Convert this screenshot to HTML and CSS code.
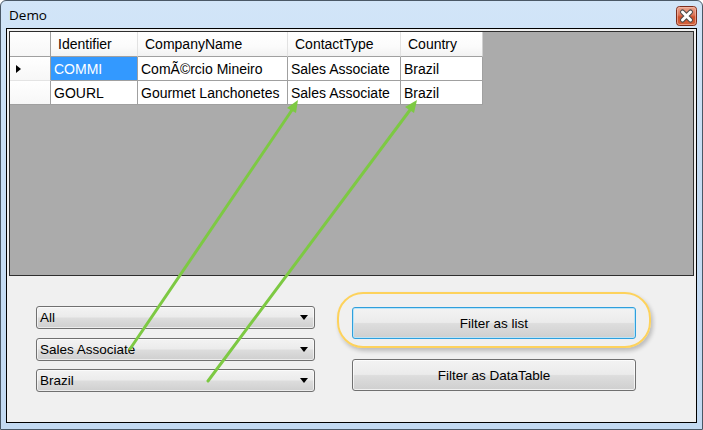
FILE: index.html
```html
<!DOCTYPE html>
<html>
<head>
<meta charset="utf-8">
<title>Demo</title>
<link rel="stylesheet" href="styles.css">
</head>
<body>
<div class="window">
  <div class="titlebar">
    <span class="title">Demo</span>
    <span class="close">
      <svg width="21" height="20" viewBox="0 0 21 20">
        <defs>
          <linearGradient id="cg" x1="0" y1="0" x2="0" y2="1">
            <stop offset="0" stop-color="#eba893"/>
            <stop offset="0.45" stop-color="#dc7458"/>
            <stop offset="0.55" stop-color="#cd4f2c"/>
            <stop offset="1" stop-color="#d2633c"/>
          </linearGradient>
        </defs>
        <rect x="0.5" y="0.5" width="20" height="19" rx="3" fill="url(#cg)" stroke="#7d2c1c"/>
        <rect x="1.5" y="1.5" width="18" height="17" rx="2" fill="none" stroke="#f3c2b2" stroke-opacity="0.6"/>
        <path d="M6.5 6 L14.5 14 M14.5 6 L6.5 14" stroke="#4a4a4a" stroke-width="5" stroke-linecap="round"/>
        <path d="M6.5 6 L14.5 14 M14.5 6 L6.5 14" stroke="#ffffff" stroke-width="3" stroke-linecap="round"/>
      </svg>
    </span>
  </div>
  <div class="client">
    <div class="grid">
      <table class="dgv">
        <tr class="hdr">
          <th class="rh"></th>
          <th class="c-id">Identifier</th>
          <th class="c-co">CompanyName</th>
          <th class="c-ct">ContactType</th>
          <th class="c-cn">Country</th>
        </tr>
        <tr>
          <td class="rh"><span class="cur"></span></td>
          <td class="sel">COMMI</td>
          <td>ComÃ©rcio Mineiro</td>
          <td>Sales Associate</td>
          <td>Brazil</td>
        </tr>
        <tr>
          <td class="rh"></td>
          <td>GOURL</td>
          <td>Gourmet Lanchonetes</td>
          <td>Sales Associate</td>
          <td>Brazil</td>
        </tr>
      </table>
    </div>
    <div class="panel">
      <div class="combos">
        <div class="combo"><span class="combo-text">All</span><span class="drop"></span></div>
        <div class="combo mid"><span class="combo-text">Sales Associate</span><span class="drop"></span></div>
        <div class="combo last"><span class="combo-text">Brazil</span><span class="drop"></span></div>
      </div>
      <div class="buttons">
        <div class="ring"></div>
        <div class="btn focused">Filter as list</div>
        <div class="btn">Filter as DataTable</div>
      </div>
    </div>
  </div>
  <svg class="arrows" width="703" height="430" viewBox="0 0 703 430">
    <g stroke="#7dc943" stroke-width="3" fill="#7dc943" stroke-linecap="round">
      <line x1="130" y1="349" x2="292" y2="110"/>
      <polygon stroke="none" points="298,100 287,108 296,113"/>
      <line x1="208" y1="381" x2="410" y2="110"/>
      <polygon stroke="none" points="417,100 405,107 414,113"/>
    </g>
  </svg>
</div>
</body>
</html>
```

FILE: styles.css
```css
html, body {
  margin: 0;
  padding: 0;
  background: #ffffff;
}

.window {
  position: relative;
  width: 703px;
  height: 430px;
  box-sizing: border-box;
  border: 1px solid #4a5866;
  border-radius: 6px 6px 0 0;
  background: linear-gradient(180deg, #d2e5f8 0%, #c6ddf4 40%, #c3daf2 100%);
  padding: 0 5px 6px 5px;
  display: flex;
  flex-direction: column;
  font-family: "Liberation Sans", Arial, sans-serif;
}

.titlebar {
  height: 27px;
  display: flex;
  align-items: flex-start;
  justify-content: space-between;
}

.title {
  font-family: "Open Sans", "Noto Sans", sans-serif;
  font-size: 13.5px;
  color: #000;
  padding: 5px 0 0 3px;
  line-height: 18px;
}

.close {
  width: 21px;
  height: 20px;
  margin: 5px 0 0 0;
  display: block;
}

.close svg {
  display: block;
}

.client {
  flex: 1;
  border: 1px solid #000;
  background: #f0f0f0;
  display: flex;
  flex-direction: column;
}

.grid {
  margin: 2px 2px 0 2px;
  height: 245px;
  box-sizing: border-box;
  border: 1px solid #2e2e2e;
  background: #ababab;
}

.dgv {
  border-collapse: separate;
  border-spacing: 0;
  table-layout: fixed;
  font-size: 14px;
  color: #000;
}

.dgv th,
.dgv td {
  box-sizing: border-box;
  padding: 0 0 0 3px;
  text-align: left;
  white-space: nowrap;
  overflow: hidden;
  border-right: 1px solid #a0a0a0;
  border-bottom: 1px solid #a0a0a0;
  background: #ffffff;
  font-weight: normal;
}

.dgv th {
  height: 25px;
  padding-left: 7px;
  background: linear-gradient(180deg, #ffffff 0%, #fbfbfb 60%, #f2f2f2 100%);
  border-right: 1px solid #e2e2e2;
  border-bottom: 1px solid #a0a0a0;
}

.dgv td {
  height: 24px;
}

.dgv .rh {
  width: 41px;
  padding: 0;
  background: linear-gradient(180deg, #ffffff 0%, #f7f7f7 100%);
  border-right: 1px solid #a0a0a0;
  border-bottom: 1px solid #e4e4e4;
  position: relative;
}

.dgv th.rh {
  border-bottom: 1px solid #a0a0a0;
}

.dgv tr:last-child .rh {
  border-bottom: 1px solid #a0a0a0;
}

.c-id { width: 87px; }
.c-co { width: 150px; }
.c-ct { width: 113px; }
.c-cn { width: 82px; }

.dgv th.c-cn {
  border-right: 1px solid #d0d0d0;
}

.dgv td.sel {
  background: #3399ff;
  color: #ffffff;
}

.cur {
  position: absolute;
  left: 6px;
  top: 8px;
  width: 0;
  height: 0;
  border-top: 4px solid transparent;
  border-bottom: 4px solid transparent;
  border-left: 5px solid #000;
}

.panel {
  display: flex;
  align-items: flex-start;
  padding: 30px 0 0 29px;
  gap: 37px;
}

.combos {
  width: 279px;
  display: flex;
  flex-direction: column;
}

.combo {
  height: 23px;
  box-sizing: border-box;
  border: 1px solid #707070;
  border-radius: 3px;
  background: linear-gradient(180deg, #f3f3f3 0%, #ebebeb 48%, #dddddd 52%, #cfcfcf 100%);
  box-shadow: inset 0 0 0 1px rgba(255, 255, 255, 0.6);
  display: flex;
  align-items: center;
  justify-content: space-between;
  padding: 0 6px 0 3px;
  font-size: 13.5px;
  color: #000;
}

.combo.mid { margin-top: 9px; }
.combo.last { margin-top: 8px; }

.drop {
  width: 0;
  height: 0;
  border-left: 4px solid transparent;
  border-right: 4px solid transparent;
  border-top: 5px solid #000;
}

.buttons {
  position: relative;
  width: 284px;
  margin-top: 1px;
  display: flex;
  flex-direction: column;
  gap: 20px;
}

.btn {
  height: 32px;
  box-sizing: border-box;
  border: 1px solid #707070;
  border-radius: 3px;
  background: linear-gradient(180deg, #f3f3f3 0%, #ebebeb 48%, #dddddd 52%, #cfcfcf 100%);
  box-shadow: inset 0 0 0 1px rgba(255, 255, 255, 0.7);
  display: flex;
  align-items: center;
  justify-content: center;
  font-size: 13.5px;
  color: #000;
  position: relative;
  z-index: 1;
}

.btn.focused {
  border-color: #2f9fdc;
  box-shadow: inset 0 0 0 1px #b9e4f8;
}

.ring {
  position: absolute;
  left: -15px;
  top: -15px;
  width: 314px;
  height: 56px;
  box-sizing: border-box;
  border: 2px solid #fdd25c;
  border-radius: 26px;
  box-shadow: 2px 3px 4px rgba(0, 0, 0, 0.22);
}

.arrows {
  position: absolute;
  left: -1px;
  top: -1px;
  pointer-events: none;
}
```
